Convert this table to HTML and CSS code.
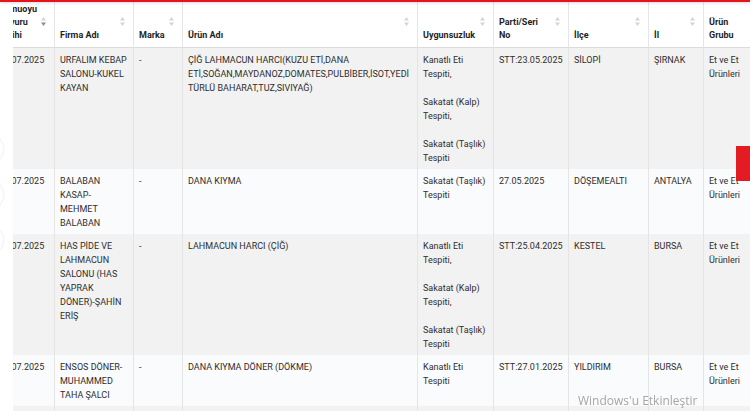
FILE: index.html
```html
<!DOCTYPE html>
<html lang="tr">
<head>
<meta charset="utf-8">
<title>Kamuoyu Duyuruları</title>
<link rel="stylesheet" href="styles.css">
</head>
<body>
<div class="topbar"></div>
<div class="page">
  <div class="gutter"></div>
  <div class="scroller">
    <table class="grid">
      <colgroup>
        <col class="c-date"><col class="c-firm"><col class="c-brand"><col class="c-product"><col class="c-issue"><col class="c-lot"><col class="c-district"><col class="c-city"><col class="c-group">
      </colgroup>
      <thead>
        <tr>
          <th>Kamuoyu Duyuru Tarihi<span class="sort sorted"><svg viewBox="0 0 5 9" width="5" height="9"><path class="up" d="M0 3.6 2.5 0 5 3.6Z"/><path class="down" d="M0 5.4 2.5 9 5 5.4Z"/></svg></span></th>
          <th>Firma Adı<span class="sort"><svg viewBox="0 0 5 9" width="5" height="9"><path class="up" d="M0 3.6 2.5 0 5 3.6Z"/><path class="down" d="M0 5.4 2.5 9 5 5.4Z"/></svg></span></th>
          <th>Marka<span class="sort"><svg viewBox="0 0 5 9" width="5" height="9"><path class="up" d="M0 3.6 2.5 0 5 3.6Z"/><path class="down" d="M0 5.4 2.5 9 5 5.4Z"/></svg></span></th>
          <th>Ürün Adı<span class="sort"><svg viewBox="0 0 5 9" width="5" height="9"><path class="up" d="M0 3.6 2.5 0 5 3.6Z"/><path class="down" d="M0 5.4 2.5 9 5 5.4Z"/></svg></span></th>
          <th>Uygunsuzluk<span class="sort"><svg viewBox="0 0 5 9" width="5" height="9"><path class="up" d="M0 3.6 2.5 0 5 3.6Z"/><path class="down" d="M0 5.4 2.5 9 5 5.4Z"/></svg></span></th>
          <th>Parti/Seri No<span class="sort"><svg viewBox="0 0 5 9" width="5" height="9"><path class="up" d="M0 3.6 2.5 0 5 3.6Z"/><path class="down" d="M0 5.4 2.5 9 5 5.4Z"/></svg></span></th>
          <th>İlçe<span class="sort"><svg viewBox="0 0 5 9" width="5" height="9"><path class="up" d="M0 3.6 2.5 0 5 3.6Z"/><path class="down" d="M0 5.4 2.5 9 5 5.4Z"/></svg></span></th>
          <th>İl<span class="sort"><svg viewBox="0 0 5 9" width="5" height="9"><path class="up" d="M0 3.6 2.5 0 5 3.6Z"/><path class="down" d="M0 5.4 2.5 9 5 5.4Z"/></svg></span></th>
          <th>Ürün Grubu<span class="sort"><svg viewBox="0 0 5 9" width="5" height="9"><path class="up" d="M0 3.6 2.5 0 5 3.6Z"/><path class="down" d="M0 5.4 2.5 9 5 5.4Z"/></svg></span></th>
        </tr>
      </thead>
      <tbody>
        <tr class="odd">
          <td>15.07.2025</td>
          <td>URFALIM KEBAP SALONU-KUKEL KAYAN</td>
          <td>-</td>
          <td>ÇİĞ LAHMACUN HARCI(KUZU ETİ,DANA ETİ,SOĞAN,MAYDANOZ,DOMATES,PULBİBER,İSOT,YEDİ TÜRLÜ BAHARAT,TUZ,SIVIYAĞ)</td>
          <td>Kanatlı Eti Tespiti,<br><br>Sakatat (Kalp) Tespiti,<br><br>Sakatat (Taşlık) Tespiti</td>
          <td>STT:23.05.2025</td>
          <td>SİLOPİ</td>
          <td>ŞIRNAK</td>
          <td>Et ve Et Ürünleri</td>
        </tr>
        <tr class="even">
          <td>15.07.2025</td>
          <td>BALABAN KASAP-MEHMET BALABAN</td>
          <td>-</td>
          <td>DANA KIYMA</td>
          <td>Sakatat (Taşlık) Tespiti</td>
          <td>27.05.2025</td>
          <td>DÖŞEMEALTI</td>
          <td>ANTALYA</td>
          <td>Et ve Et Ürünleri</td>
        </tr>
        <tr class="odd">
          <td>15.07.2025</td>
          <td>HAS PİDE VE LAHMACUN SALONU (HAS YAPRAK DÖNER)-ŞAHİN ERİŞ</td>
          <td>-</td>
          <td>LAHMACUN HARCI (ÇİĞ)</td>
          <td>Kanatlı Eti Tespiti,<br><br>Sakatat (Kalp) Tespiti,<br><br>Sakatat (Taşlık) Tespiti</td>
          <td>STT:25.04.2025</td>
          <td>KESTEL</td>
          <td>BURSA</td>
          <td>Et ve Et Ürünleri</td>
        </tr>
        <tr class="even">
          <td>15.07.2025</td>
          <td>ENSOS DÖNER-MUHAMMED TAHA ŞALCI</td>
          <td>-</td>
          <td>DANA KIYMA DÖNER (DÖKME)</td>
          <td>Kanatlı Eti Tespiti</td>
          <td>STT:27.01.2025</td>
          <td>YILDIRIM</td>
          <td>BURSA</td>
          <td>Et ve Et Ürünleri</td>
        </tr>
        <tr class="odd">
          <td>15.07.2025</td>
          <td>KARDEŞLER ET MANGAL</td>
          <td>-</td>
          <td>DANA KIYMA</td>
          <td>Sakatat (Taşlık) Tespiti</td>
          <td>STT:20.05.2025</td>
          <td>OSMANGAZİ</td>
          <td>BURSA</td>
          <td>Et ve Et Ürünleri</td>
        </tr>
      </tbody>
    </table>
  </div>
</div>
<div class="side-circle c1"></div>
<div class="side-circle c2"></div>
<div class="side-circle c3"></div>
<div class="side-tab"></div>
<div class="watermark">Windows'u Etkinleştir</div>
</body>
</html>
```

FILE: styles.css
```css
html, body {
  margin: 0;
  padding: 0;
  background: #ffffff;
  overflow: hidden;
}

body {
  font-family: Roboto, "Liberation Sans", Arial, sans-serif;
  font-size: 9px;
  color: #2e2e2e;
}

.topbar {
  height: 2px;
  background: #e3141b;
  box-shadow: 0 1px 3px rgba(0, 0, 0, 0.18);
  position: relative;
  z-index: 2;
}

.page {
  display: flex;
}

.gutter {
  width: 13px;
  flex: none;
  background: #ffffff;
}

.scroller {
  flex: 1;
  overflow: hidden;
}

.grid {
  table-layout: fixed;
  width: 770px;
  margin-left: -19px;
  border-collapse: separate;
  border-spacing: 0;
}

.c-date { width: 61px; }
.c-firm { width: 79px; }
.c-brand { width: 49px; }
.c-product { width: 235px; }
.c-issue { width: 76px; }
.c-lot { width: 75px; }
.c-district { width: 80px; }
.c-city { width: 55px; }
.c-group { width: 60px; }

.grid th {
  position: relative;
  text-align: left;
  vertical-align: bottom;
  font-weight: 700;
  color: #1f1f1f;
  line-height: 13px;
  padding: 1px 20px 5px 5px;
  border-right: 1px solid #e6e6e6;
  border-bottom: 1px solid #dcdcdc;
  background: #ffffff;
}

.sort {
  position: absolute;
  right: 8px;
  top: 15px;
  width: 5px;
  height: 9px;
  display: block;
}

.sort svg {
  display: block;
}

.sort path {
  fill: #d4d4d4;
}

.sort.sorted .down {
  fill: #8e8e8e;
}

.grid td {
  vertical-align: top;
  line-height: 14px;
  padding: 5px 5px 4px 5px;
  border-right: 1px solid #e5e5e5;
}

.grid tr.odd td {
  background: #f2f2f2;
}

.grid tr.even td {
  background: #fafbfc;
}

.side-circle {
  position: fixed;
  left: -25px;
  width: 28px;
  height: 28px;
  border-radius: 50%;
  background: #ffffff;
  box-shadow: 0 0 3px rgba(0, 0, 0, 0.13);
  z-index: 3;
}

.c1 { top: 135px; }
.c2 { top: 181px; }
.c3 { top: 226px; }

.side-tab {
  position: fixed;
  left: 736px;
  top: 146px;
  width: 14px;
  height: 35px;
  background: #e31b23;
  z-index: 3;
}

.watermark {
  position: fixed;
  left: 578px;
  top: 393px;
  font-family: "Open Sans", "Noto Sans", sans-serif;
  font-size: 12px;
  line-height: 16px;
  color: rgba(150, 150, 150, 0.85);
  white-space: nowrap;
  z-index: 4;
}
```
